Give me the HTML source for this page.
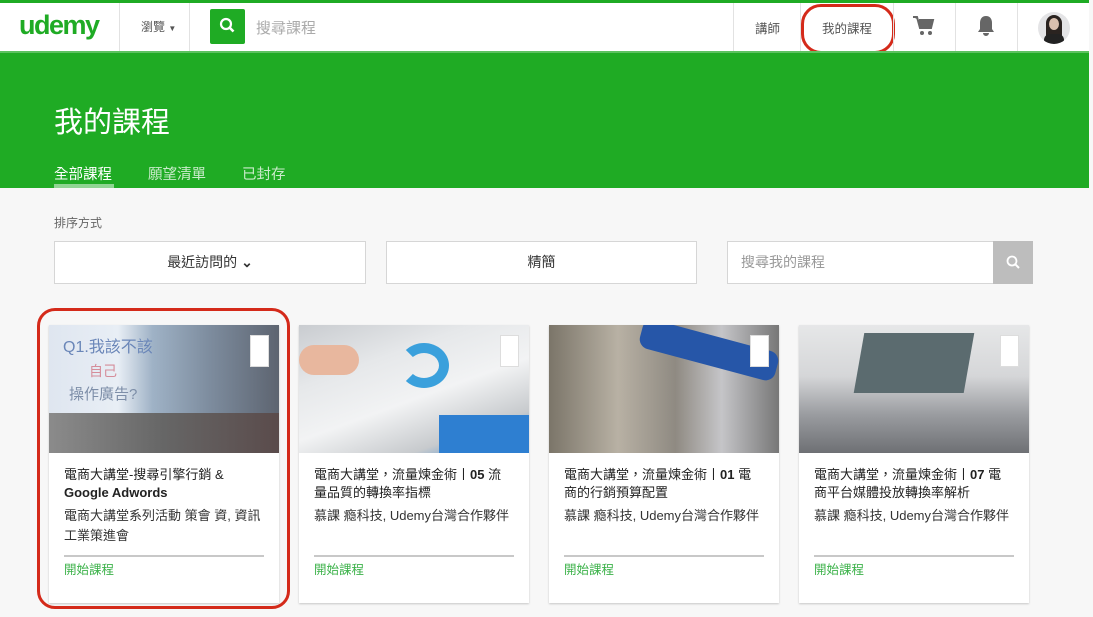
<!DOCTYPE html>
<html><head><meta charset="utf-8"><style>
*{box-sizing:border-box;margin:0;padding:0}
body{width:1093px;height:617px;overflow:hidden;background:#f7f7f7;font-family:"Liberation Sans","Noto Sans CJK TC",sans-serif;position:relative}
.abs{position:absolute}
.nav{left:0;top:0;width:1089px;height:51px;background:#fff;border-top:3px solid #1fab24}
.banner{left:0;top:51px;width:1089px;height:137px;background:#1fab24;border-top:2px solid #5cc260}
.vl{position:absolute;top:0;width:1px;height:48px;background:#e2e2e2}
.t{position:absolute;white-space:nowrap}
.box{position:absolute;top:241px;height:43px;background:#fff;border:1px solid #d6d6d6;font-size:14px;color:#333;text-align:center;line-height:41px}
.card{position:absolute;top:325px;width:230px;height:278px;background:#fff;box-shadow:0 1px 2px rgba(0,0,0,.2)}
.img{height:128px;position:relative;overflow:hidden}
.menu{position:absolute;right:10px;top:10px;width:19px;height:32px;background:#fff;border:1px solid #ddd}
.ti{position:absolute;left:15px;top:141px;width:196px;font-size:13px;line-height:18px;color:#222}
.au{position:absolute;left:15px;top:181px;width:202px;font-size:13px;line-height:20px;color:#333}
.hr{position:absolute;left:15px;top:230px;width:200px;height:2px;background:#c8c8c8}
.go{position:absolute;left:15px;top:234px;font-size:12.5px;color:#3cb24a}
</style></head><body>
<div class="abs nav">
 <div class="t" style="left:19px;top:7px;font-size:27px;font-weight:bold;color:#1fab24;letter-spacing:-1.5px">udemy</div>
 <div class="vl" style="left:119px"></div>
 <div class="t" style="left:141px;top:15px;font-size:12px;color:#555">瀏覽 <span style="font-size:8px">▼</span></div>
 <div class="vl" style="left:189px"></div>
 <div class="abs" style="left:210px;top:6px;width:35px;height:35px;background:#1fab24;border-radius:2px">
  <svg width="35" height="35"><circle cx="16" cy="15" r="5" fill="none" stroke="#fff" stroke-width="2.2"/><path d="M19.5 18.5l4 4" stroke="#fff" stroke-width="2.6"/></svg></div>
 <div class="t" style="left:256px;top:14px;font-size:15px;color:#aaa">搜尋課程</div>
 <div class="vl" style="left:733px"></div>
 <div class="t" style="left:755px;top:15px;font-size:12.5px;color:#555">講師</div>
 <div class="vl" style="left:800px"></div>
 <div class="t" style="left:822px;top:15px;font-size:12.5px;color:#555">我的課程</div>
 <div class="abs" style="left:801px;top:1px;width:94px;height:50px;border:3.5px solid #d42a1a;border-radius:20px"></div>
 <div class="vl" style="left:893px"></div>
 <svg class="abs" style="left:912px;top:12px" width="24" height="22"><path d="M1 2h4l3 11h11l2-8H7" fill="#666" stroke="#666" stroke-width="2"/><circle cx="10" cy="18" r="2" fill="#666"/><circle cx="18" cy="18" r="2" fill="#666"/></svg>
 <div class="vl" style="left:955px"></div>
 <svg class="abs" style="left:976px;top:12px" width="20" height="22"><path d="M10 1c-4 0-6 3-6 7v6l-2 3h16l-2-3V8c0-4-2-7-6-7zM7 18a3 3 0 006 0z" fill="#666"/></svg>
 <div class="vl" style="left:1017px"></div>
 <div class="abs" style="left:1038px;top:9px;width:32px;height:32px;border-radius:50%;overflow:hidden;background:#e4e4e6">
  <div class="abs" style="left:8px;top:3px;width:16px;height:26px;background:#2a2320;border-radius:8px 8px 2px 2px"></div>
  <div class="abs" style="left:11px;top:6px;width:10px;height:12px;background:#d9bfae;border-radius:50%"></div>
  <div class="abs" style="left:6px;top:22px;width:20px;height:12px;background:#222;border-radius:6px 6px 0 0"></div></div>
</div>
<div class="abs banner">
 <div class="t" style="left:54px;top:46px;font-size:29px;color:#fff">我的課程</div>
 <div class="t" style="left:54px;top:110px;font-size:14.5px;color:#fff">全部課程</div>
 <div class="abs" style="left:54px;top:131px;width:60px;height:4px;background:#8fd592"></div>
 <div class="t" style="left:148px;top:110px;font-size:14.5px;color:#c9ebca">願望清單</div>
 <div class="t" style="left:242px;top:110px;font-size:14.5px;color:#c9ebca">已封存</div>
</div>
<div class="t" style="left:54px;top:214px;font-size:12px;color:#666">排序方式</div>
<div class="box" style="left:54px;width:312px">最近訪問的 <b>⌄</b></div>
<div class="box" style="left:386px;width:311px">精簡</div>
<div class="box" style="left:727px;width:306px;text-align:left;padding-left:13px;color:#999">搜尋我的課程
 <div class="abs" style="right:-1px;top:-1px;width:40px;height:43px;background:#bdbdbd"><svg width="40" height="43"><circle cx="19" cy="20" r="4.5" fill="none" stroke="#fff" stroke-width="1.8"/><path d="M22 23l4 4" stroke="#fff" stroke-width="2"/></svg></div></div>
<div class="abs" style="left:37px;top:308px;width:253px;height:301px;border:3.5px solid #d42a1a;border-radius:18px"></div>

<div class="card" style="left:49px"><div class="img" style="background:linear-gradient(90deg,#dfe6f0 0,#e8eef5 30%,#9fb2c6 45%,#7d8c9e 70%,#5d6470 100%)">
 <div class="abs" style="left:0;top:88px;width:230px;height:40px;background:linear-gradient(90deg,#8b8b8b,#666 50%,#5a4b4b)"></div>
 <div class="t" style="left:14px;top:8px;font-size:16px;color:#6a86b8">Q1.我該不該</div>
 <div class="t" style="left:40px;top:36px;font-size:14px;color:#d58d9a">自己</div>
 <div class="t" style="left:20px;top:58px;font-size:15px;color:#7d8ea8">操作廣告?</div>
 <div class="menu"></div></div>
 <div class="ti">電商大講堂-搜尋引擎行銷 &amp;<br><b>Google Adwords</b></div>
 <div class="au" style="width:198px">電商大講堂系列活動 策會 資, 資訊工業策進會</div>
 <div class="hr"></div><div class="go">開始課程</div></div>

<div class="card" style="left:299px"><div class="img" style="background:linear-gradient(160deg,#c9ccd0 0,#e6e8ea 30%,#f2f3f4 55%,#c7cacd 80%,#2f7fcf 100%)">
 <div class="abs" style="left:100px;top:18px;width:50px;height:45px;border-radius:50%;border:10px solid #3aa0dc;border-left-color:transparent"></div>
 <div class="abs" style="left:0;top:20px;width:60px;height:30px;background:#e8b79e;border-radius:15px"></div>
 <div class="abs" style="left:140px;top:90px;width:90px;height:38px;background:#2e7fd1"></div>
 <div class="menu"></div></div>
 <div class="ti">電商大講堂，流量煉金術丨<b>05</b> 流量品質的轉換率指標</div>
 <div class="au">慕課 瘾科技, Udemy台灣合作夥伴</div>
 <div class="hr"></div><div class="go">開始課程</div></div>

<div class="card" style="left:549px"><div class="img" style="background:linear-gradient(90deg,#7b7569 0,#b8b1a4 30%,#8f8a82 55%,#c5c5c8 75%,#777 100%)">
 <div class="abs" style="left:90px;top:10px;width:140px;height:30px;background:#2656a8;transform:rotate(15deg);border-radius:10px"></div>
 <div class="menu"></div></div>
 <div class="ti">電商大講堂，流量煉金術丨<b>01</b> 電商的行銷預算配置</div>
 <div class="au">慕課 瘾科技, Udemy台灣合作夥伴</div>
 <div class="hr"></div><div class="go">開始課程</div></div>

<div class="card" style="left:799px"><div class="img" style="background:linear-gradient(180deg,#e6e7e8 0,#d5d6d8 40%,#9a9ca0 70%,#6e7074 100%)">
 <div class="abs" style="left:60px;top:8px;width:110px;height:60px;background:#5b6b6f;transform:skewX(-10deg)"></div>
 <div class="menu"></div></div>
 <div class="ti">電商大講堂，流量煉金術丨<b>07</b> 電商平台媒體投放轉換率解析</div>
 <div class="au">慕課 瘾科技, Udemy台灣合作夥伴</div>
 <div class="hr"></div><div class="go">開始課程</div></div>
</body></html>
